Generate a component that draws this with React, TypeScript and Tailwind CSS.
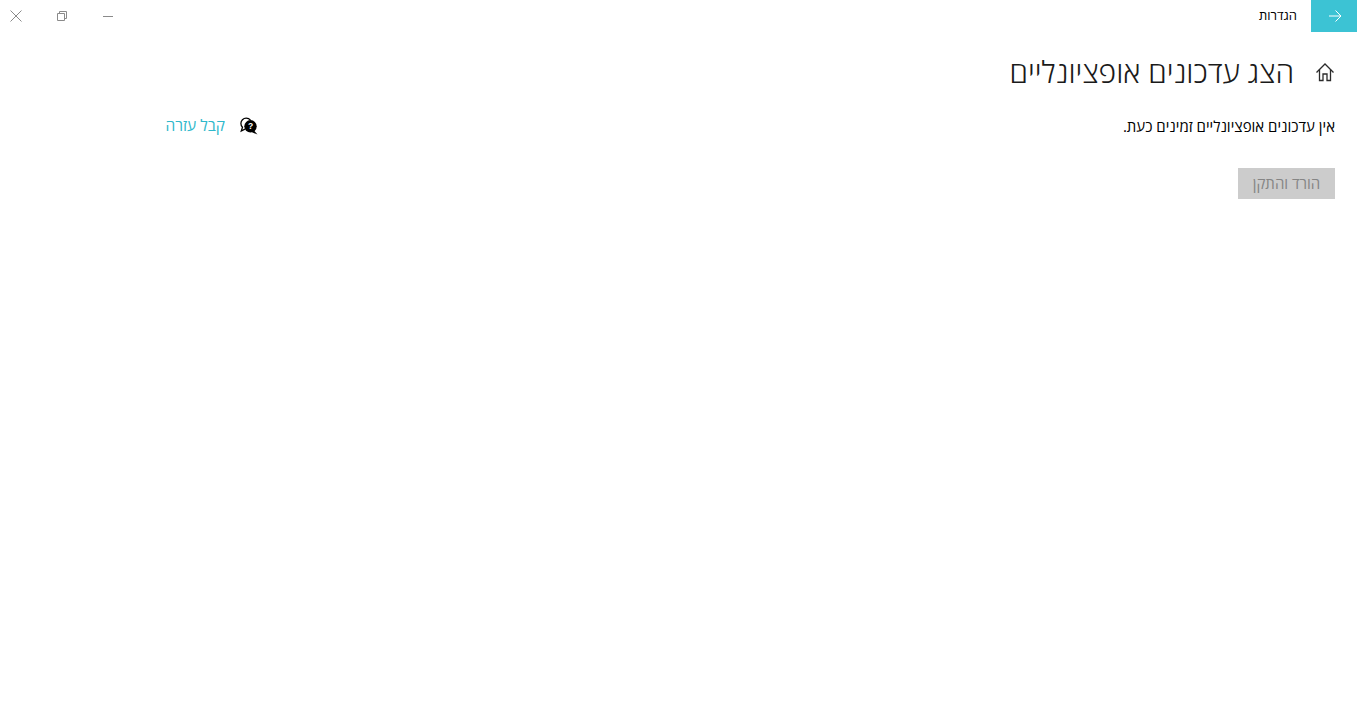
function WindowControls() {
  return (
    <div className="flex h-8 items-center" dir="ltr">
      <button className="flex h-8 w-8 items-center justify-center">
        <svg width="12" height="12" viewBox="0 0 12 12" stroke="#8a8a8a" strokeWidth="1" fill="none">
          <path d="M0.5 0.5L11.5 11.5M11.5 0.5L0.5 11.5" />
        </svg>
      </button>
      <button className="ml-[14px] flex h-8 w-8 items-center justify-center">
        <svg width="10" height="10" viewBox="0 0 10 10" stroke="#8a8a8a" strokeWidth="1" fill="none">
          <path d="M0.5 2.5H7.5V9.5H0.5Z" />
          <path d="M2.5 2.5V0.5H9.5V7.5H7.5" />
        </svg>
      </button>
      <button className="ml-[14px] flex h-8 w-8 items-center justify-center">
        <span className="block h-px w-[10px] bg-[#8a8a8a]" />
      </button>
    </div>
  )
}

function BackArrow() {
  return (
    <svg width="13" height="12" viewBox="0 0 13 12" fill="none" stroke="#fff" strokeWidth="1" className="-mt-px ml-[2px]">
      <path d="M0 6H12" />
      <path d="M6.5 0.5L12 6L6.5 11.5" />
    </svg>
  )
}

function HomeIcon() {
  return (
    <svg width="20" height="20" viewBox="0 0 20 20" fill="none" stroke="#2b2b2b" strokeWidth="1.3" strokeLinejoin="miter">
      <path d="M1.5 10.5L10 2L18.5 10.5" />
      <path d="M4.5 7.5V18.5H8V12H12V18.5H15.5V7.5" />
    </svg>
  )
}

function HelpIcon() {
  return (
    <svg width="18" height="18" viewBox="0 0 18 18">
      <path
        d="M10.5 3.2C9.4 1.9 7.8 1.2 6.2 1.2 3.2 1.2.9 3.6.9 6.4c0 1.5.6 2.8 1.6 3.8L1.3 14l3.6-1.8"
        fill="none"
        stroke="#000"
        strokeWidth="1.3"
      />
      <circle cx="10.5" cy="9.3" r="6.2" fill="#000" />
      <path d="M13.5 13l4 4.5-5.5-2.2z" fill="#000" />
      <text x="10.5" y="12.4" textAnchor="middle" fontSize="8.5" fontWeight="700" fill="#fff" fontFamily="'Liberation Sans', sans-serif">
        ?
      </text>
    </svg>
  )
}

export default function App() {
  return (
    <div dir="rtl" className="min-h-[710px] bg-white font-['Open_Sans','Liberation_Sans',sans-serif] text-black">
      <header className="flex h-8 items-center justify-between">
        <div className="flex items-center">
          <button className="flex h-8 w-[46px] items-center justify-center bg-[#3cc3d4]">
            <BackArrow />
          </button>
          <span className="mr-[14px] text-[13px]">הגדרות</span>
        </div>
        <WindowControls />
      </header>

      <div className="flex pr-[22px]">
        <main className="flex-1">
          <div className="mt-[20px] flex h-10 items-center gap-[21px]">
            <HomeIcon />
            <h1 className="text-[30px] font-light leading-10 text-[#1a1a1a]">הצג עדכונים אופציונליים</h1>
          </div>
          <p className="mt-[24px] h-5 text-[15px] leading-5">אין עדכונים אופציונליים זמינים כעת.</p>
          <button className="mt-[32px] h-[31px] w-[97px] bg-[#cccccc] text-[15px] text-[#858585]">הורד והתקן</button>
        </main>
        <aside className="mt-[84px] flex h-5 w-[258px] items-center gap-[15px]">
          <HelpIcon />
          <a className="text-[15.5px] text-[#2fb8cb]">קבל עזרה</a>
        </aside>
      </div>
    </div>
  )
}
